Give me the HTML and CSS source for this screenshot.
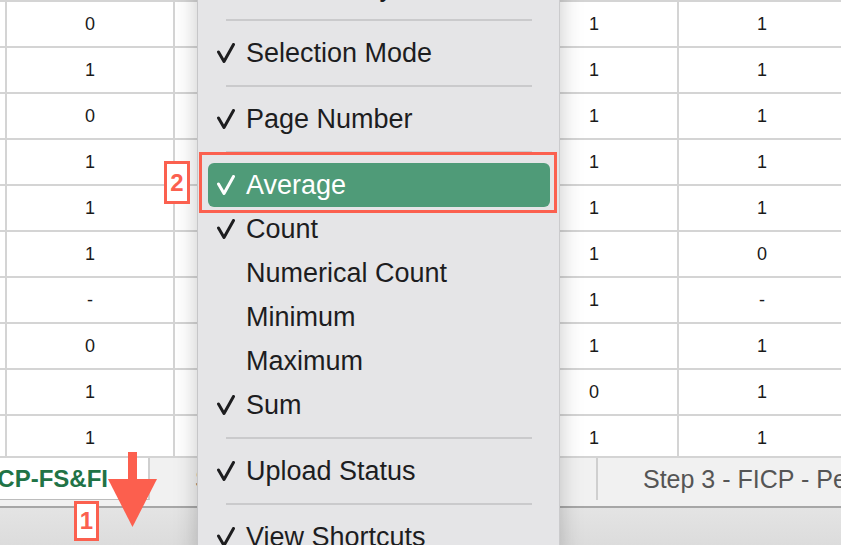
FILE: index.html
```html
<!DOCTYPE html>
<html lang="en">
<head>
    <meta charset="UTF-8">
    <meta name="viewport" content="width=device-width, initial-scale=1.0">
    <title>Status Bar Options</title>
    <link rel="stylesheet" href="styles.css">
</head>
<body>

    <div class="app">

        <!-- Sheet grid -->
        <div class="sheet">
            <div class="grid">
                <div class="cell"></div><div class="cell">0</div><div class="cell"></div><div class="cell"></div><div class="cell">1</div><div class="cell">1</div>
                <div class="cell"></div><div class="cell">1</div><div class="cell"></div><div class="cell"></div><div class="cell">1</div><div class="cell">1</div>
                <div class="cell"></div><div class="cell">0</div><div class="cell"></div><div class="cell"></div><div class="cell">1</div><div class="cell">1</div>
                <div class="cell"></div><div class="cell">1</div><div class="cell"></div><div class="cell"></div><div class="cell">1</div><div class="cell">1</div>
                <div class="cell"></div><div class="cell">1</div><div class="cell"></div><div class="cell"></div><div class="cell">1</div><div class="cell">1</div>
                <div class="cell"></div><div class="cell">1</div><div class="cell"></div><div class="cell"></div><div class="cell">1</div><div class="cell">0</div>
                <div class="cell"></div><div class="cell">-</div><div class="cell"></div><div class="cell"></div><div class="cell">1</div><div class="cell">-</div>
                <div class="cell"></div><div class="cell">0</div><div class="cell"></div><div class="cell"></div><div class="cell">1</div><div class="cell">1</div>
                <div class="cell"></div><div class="cell">1</div><div class="cell"></div><div class="cell"></div><div class="cell">0</div><div class="cell">1</div>
                <div class="cell"></div><div class="cell">1</div><div class="cell"></div><div class="cell"></div><div class="cell">1</div><div class="cell">1</div>
            </div>
        </div>

        <!-- Sheet tabs -->
        <div class="tabbar">
            <div class="tab active"><span>Step 1 - FICP-FS&amp;FI</span></div>
            <div class="tab tab-2">Step 2 - FICP - Reconciliation</div>
            <div class="tab">Step 3 - FICP - Period</div>
        </div>

        <!-- Status bar -->
        <div class="statusbar"></div>

        <!-- Context menu -->
        <div class="menu">
            <div class="item"><svg class="check" viewBox="0 0 18 20"><polyline points="1.5,9 7,18.5 16.5,1.5"/></svg>Accessibility</div>
            <div class="sep"></div>
            <div class="item"><svg class="check" viewBox="0 0 18 20"><polyline points="1.5,9 7,18.5 16.5,1.5"/></svg>Selection Mode</div>
            <div class="sep"></div>
            <div class="item"><svg class="check" viewBox="0 0 18 20"><polyline points="1.5,9 7,18.5 16.5,1.5"/></svg>Page Number</div>
            <div class="sep"></div>
            <div class="item selected"><svg class="check" viewBox="0 0 18 20"><polyline points="1.5,9 7,18.5 16.5,1.5"/></svg>Average</div>
            <div class="item"><svg class="check" viewBox="0 0 18 20"><polyline points="1.5,9 7,18.5 16.5,1.5"/></svg>Count</div>
            <div class="item"><span class="blank"></span>Numerical Count</div>
            <div class="item"><span class="blank"></span>Minimum</div>
            <div class="item"><span class="blank"></span>Maximum</div>
            <div class="item"><svg class="check" viewBox="0 0 18 20"><polyline points="1.5,9 7,18.5 16.5,1.5"/></svg>Sum</div>
            <div class="sep"></div>
            <div class="item"><svg class="check" viewBox="0 0 18 20"><polyline points="1.5,9 7,18.5 16.5,1.5"/></svg>Upload Status</div>
            <div class="sep"></div>
            <div class="item"><svg class="check" viewBox="0 0 18 20"><polyline points="1.5,9 7,18.5 16.5,1.5"/></svg>View Shortcuts</div>
        </div>

        <!-- Annotations -->
        <div class="mark-box"></div>
        <div class="mark-label label-2">2</div>
        <div class="mark-label label-1">1</div>
        <svg class="arrow" viewBox="0 0 60 80">
            <rect x="23" y="0" width="9" height="30"/>
            <polygon points="3,27 52,27 27.5,75"/>
        </svg>

    </div>

</body>
</html>
```

FILE: styles.css
```css
/* Reset */
* {
    margin: 0;
    padding: 0;
    box-sizing: border-box;
}

body {
    font-family: 'Liberation Sans', Arial, sans-serif;
    background-color: #ffffff;
    color: #1d1d1f;
}

.app {
    position: relative;
    width: 841px;
    height: 545px;
    overflow: hidden;
    display: flex;
    flex-direction: column;
}

/* Sheet */
.sheet {
    height: 456px;
    overflow: hidden;
    flex-shrink: 0;
}

.grid {
    display: grid;
    grid-template-columns: 7px repeat(5, 168px);
    grid-auto-rows: 46px;
    border-top: 2px solid #d4d4d4;
}

.cell {
    border-right: 2px solid #d4d4d4;
    border-bottom: 2px solid #d4d4d4;
    display: flex;
    align-items: center;
    justify-content: center;
    font-size: 18px;
    color: #1a1a1a;
}

/* Tabs */
.tabbar {
    height: 52px;
    flex-shrink: 0;
    display: flex;
    background-color: #f1f1f1;
    border-top: 2px solid #d4d4d4;
    border-bottom: 2px solid #a7a7a7;
    padding-bottom: 6px;
}

.tab {
    display: flex;
    align-items: center;
    padding: 0 45px;
    font-size: 25px;
    color: #555555;
    white-space: nowrap;
    overflow: hidden;
    border-right: 2px solid #cfcfcf;
    flex-shrink: 0;
}

.tab-2 {
    width: 448px;
}

.tab.active {
    width: 150px;
    padding: 0 40px 0 0;
    justify-content: flex-end;
    background-color: #ffffff;
    color: #217346;
    font-size: 24px;
    font-weight: bold;
    border-bottom: 1px solid #bcbcbc;
}

.statusbar {
    flex: 1;
    background: linear-gradient(#e4e4e4, #dcdcdc);
}

/* Menu */
.menu {
    position: absolute;
    left: 197px;
    top: -35px;
    width: 363px;
    padding: 0 9px 0 10px;
    background-color: #e5e5e7;
    border-left: 1px solid #c6c6c8;
    border-right: 1px solid #cbcbcd;
    box-shadow: 0 0 22px rgba(0, 0, 0, 0.22);
    z-index: 5;
}

.item {
    height: 44px;
    display: flex;
    align-items: center;
    gap: 11px;
    padding-left: 9px;
    font-size: 27px;
    color: #1d1d1f;
    border-radius: 6px;
    white-space: nowrap;
}

.item.selected {
    background-color: #4f9b78;
    color: #ffffff;
}

.check {
    width: 18px;
    height: 20px;
    flex-shrink: 0;
}

.check polyline {
    fill: none;
    stroke: #1d1d1f;
    stroke-width: 3;
    stroke-linecap: round;
    stroke-linejoin: round;
}

.item.selected .check polyline {
    stroke: #ffffff;
}

.blank {
    width: 18px;
    flex-shrink: 0;
}

.sep {
    height: 22px;
    padding: 10px 18px;
}

.sep::after {
    content: "";
    display: block;
    height: 2px;
    background-color: #cacacc;
}

/* Annotations */
.mark-box {
    position: absolute;
    left: 199px;
    top: 152px;
    width: 358px;
    height: 61px;
    border: 3.5px solid #fb604f;
    z-index: 6;
}

.mark-label {
    position: absolute;
    display: flex;
    align-items: center;
    justify-content: center;
    background-color: #ffffff;
    border: 3px solid #fb604f;
    color: #fb604f;
    font-weight: bold;
    font-size: 24px;
    z-index: 6;
}

.label-2 {
    left: 164px;
    top: 161px;
    width: 26px;
    height: 43px;
}

.label-1 {
    left: 74px;
    top: 501px;
    width: 25px;
    height: 40px;
}

.arrow {
    position: absolute;
    left: 105px;
    top: 452px;
    width: 60px;
    height: 80px;
    fill: #fc5f4e;
    z-index: 6;
}
```
